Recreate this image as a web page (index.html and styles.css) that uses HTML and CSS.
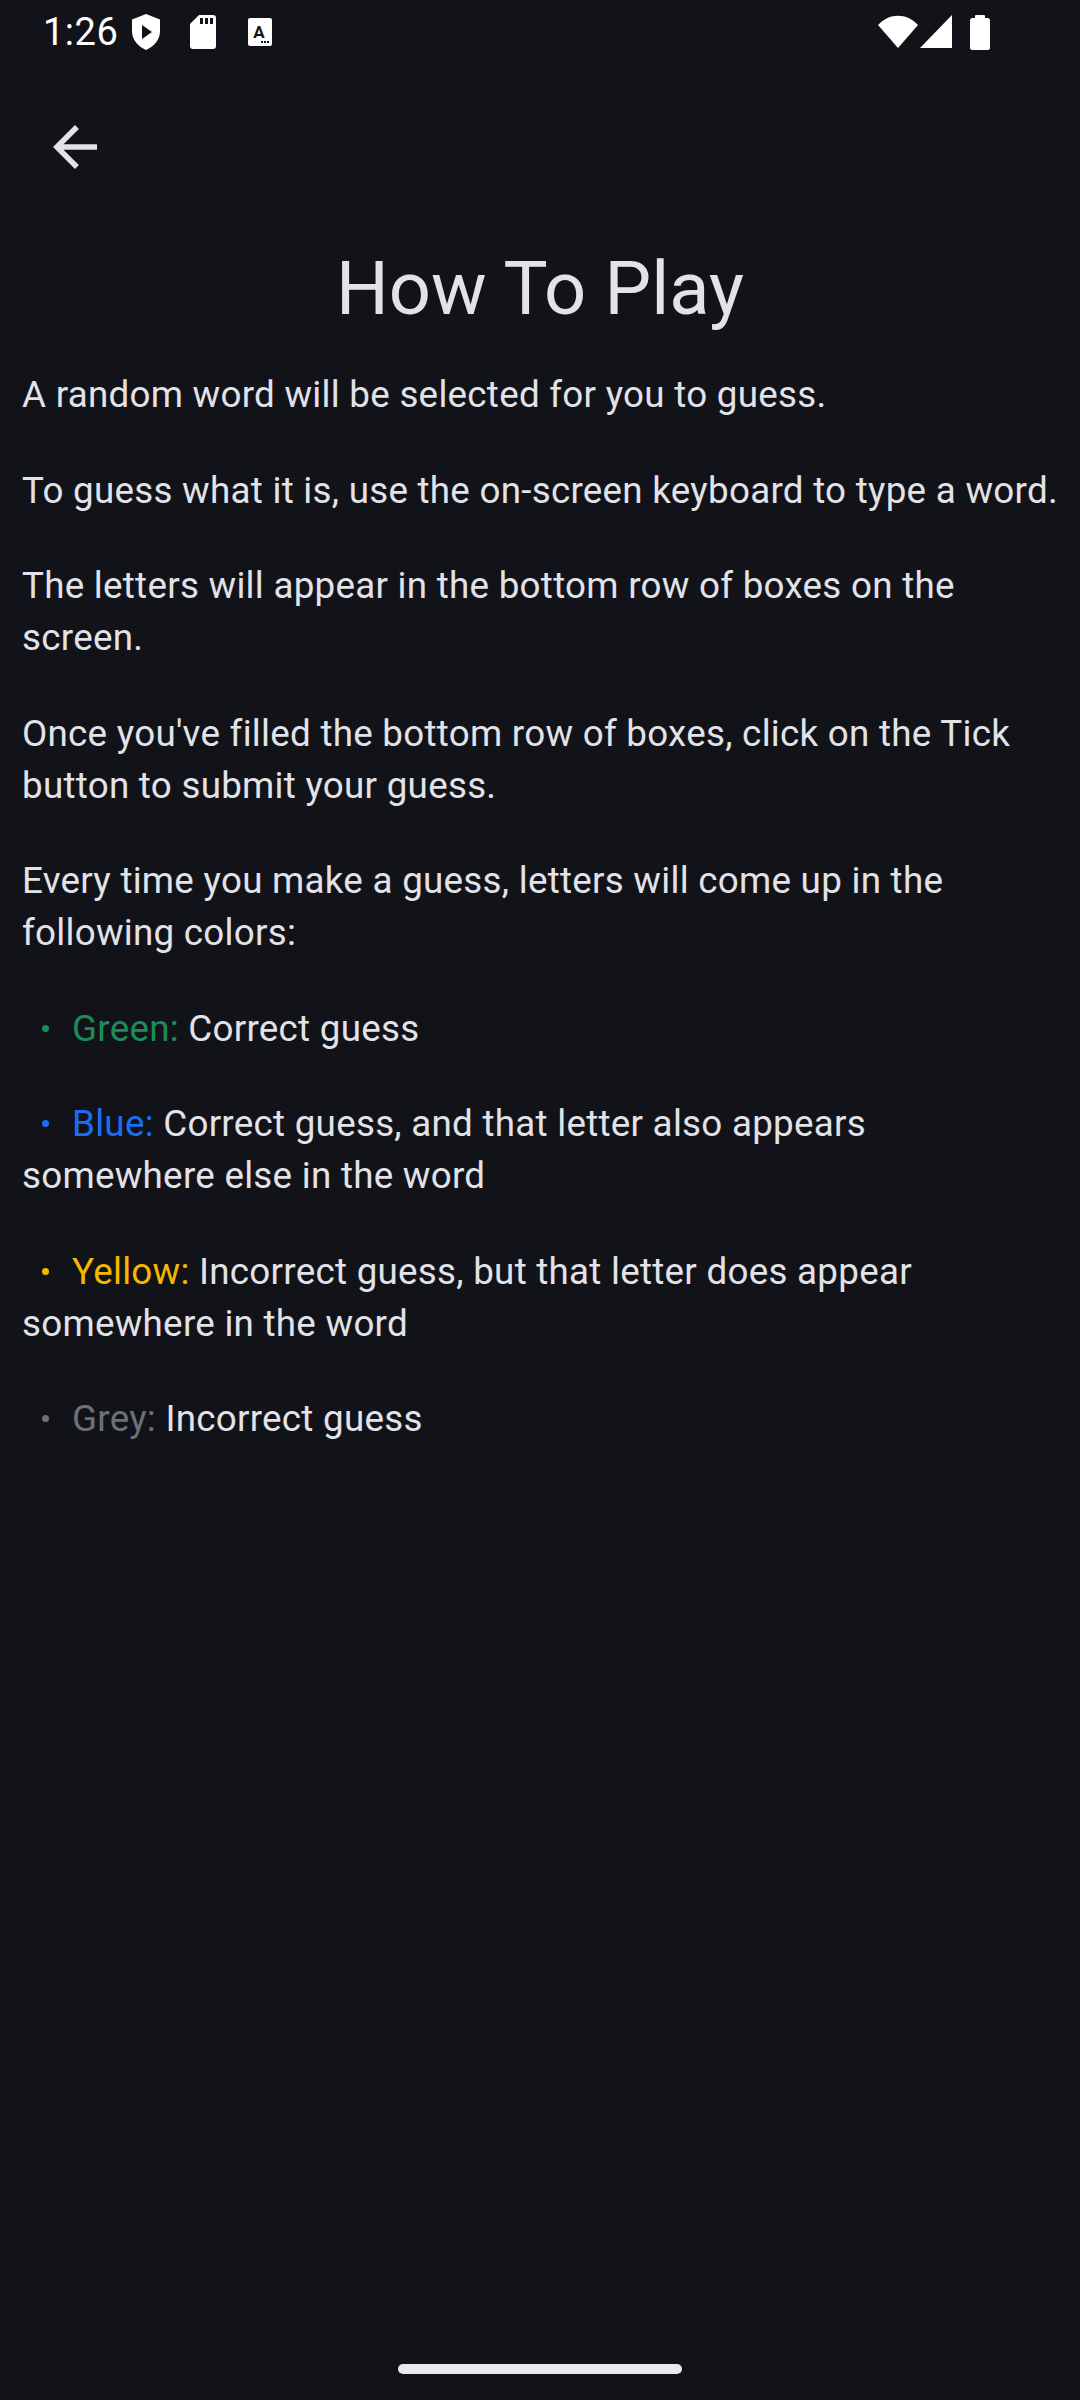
FILE: index.html
```html
<!DOCTYPE html>
<html lang="en">
<head>
<meta charset="utf-8">
<title>How To Play</title>
<link rel="stylesheet" href="styles.css">
</head>
<body>
<div class="screen">
  <div class="statusbar">
    <div class="status-left">
      <span class="time">1:26</span>
      <svg class="ic-shield" width="28" height="36" viewBox="0 0 28 36">
        <path d="M14 0 L28 5.5 V17 C28 26 22 32.5 14 36 C6 32.5 0 26 0 17 V5.5 Z" fill="#fff"/>
        <path d="M10 11 L20 18 L10 25 Z" fill="#121318"/>
      </svg>
      <svg class="ic-sd" width="26" height="34" viewBox="0 0 26 34">
        <path d="M9 0 H23 A3 3 0 0 1 26 3 V31 A3 3 0 0 1 23 34 H3 A3 3 0 0 1 0 31 V9 Z" fill="#fff"/>
        <rect x="10" y="3" width="3" height="6" fill="#121318"/>
        <rect x="15" y="3" width="3" height="6" fill="#121318"/>
        <rect x="20" y="3" width="3" height="6" fill="#121318"/>
      </svg>
      <svg class="ic-a" width="24" height="28" viewBox="0 0 24 28">
        <rect x="0" y="0" width="24" height="28" rx="2" fill="#fff"/>
        <text x="11" y="20" font-family="Roboto, sans-serif" font-weight="700" font-size="17" text-anchor="middle" fill="#121318">A</text>
        <rect x="13" y="23" width="2" height="2" fill="#121318"/>
        <rect x="16" y="23" width="2" height="2" fill="#121318"/>
        <rect x="19" y="23" width="2" height="2" fill="#121318"/>
      </svg>
    </div>
    <div class="status-right">
      <svg class="ic-wifi" width="40" height="34" viewBox="0 0 40 34">
        <path d="M0 10 C11 -2.5 29 -2.5 40 10 L20 33 Z" fill="#fff"/>
      </svg>
      <svg class="ic-signal" width="32" height="34" viewBox="0 0 32 34">
        <path d="M32 0 V33 H0 Z" fill="#fff"/>
      </svg>
      <svg class="ic-battery" width="20" height="35" viewBox="0 0 20 35">
        <rect x="5" y="0" width="10" height="4" rx="1" fill="#fff"/>
        <rect x="0" y="3" width="20" height="32" rx="2.5" fill="#fff"/>
      </svg>
    </div>
  </div>

  <div class="appbar">
    <svg class="back" width="66" height="66" viewBox="0 0 24 24">
      <path d="M20 11H7.83l5.59-5.59L12 4l-8 8 8 8 1.41-1.41L7.83 13H20v-2z" fill="#e2e2e9"/>
    </svg>
  </div>

  <h1 class="title">How To Play</h1>

  <div class="content">
    <p class="para">A random word will be selected for you to guess.</p>
    <p class="para">To guess what it is, use the on-screen keyboard to type a word.</p>
    <p class="para">The letters will appear in the bottom row of boxes on the screen.</p>
    <p class="para">Once you've filled the bottom row of boxes, click on the Tick button to submit your guess.</p>
    <p class="para">Every time you make a guess, letters will come up in the following colors:</p>
    <p class="para"><span class="label green">Green:</span> Correct guess</p>
    <p class="para"><span class="label blue">Blue:</span> Correct guess, and that letter also appears somewhere else in the word</p>
    <p class="para"><span class="label yellow">Yellow:</span> Incorrect guess, but that letter does appear somewhere in the word</p>
    <p class="para"><span class="label grey">Grey:</span> Incorrect guess</p>
  </div>

  <div class="homebar"><div class="handle"></div></div>
</div>
</body>
</html>
```

FILE: styles.css
```css
html, body {
  margin: 0;
  padding: 0;
  background: #121318;
}

.screen {
  width: 1080px;
  height: 2400px;
  display: flex;
  flex-direction: column;
  background: #121318;
  color: #e2e2e9;
  font-family: Roboto, "Noto Sans", sans-serif;
  overflow: hidden;
}

.statusbar {
  height: 48px;
  padding: 8px 90px 16px 43px;
  display: flex;
  align-items: center;
  justify-content: space-between;
}

.status-left {
  display: flex;
  align-items: center;
}

.time {
  font-size: 38px;
  line-height: 48px;
  color: #ffffff;
  letter-spacing: 0.5px;
}

.ic-shield { margin-left: 14px; }
.ic-sd { margin-left: 30px; }
.ic-a { margin-left: 32px; }

.status-right {
  display: flex;
  align-items: center;
}

.ic-signal { margin-left: 2px; }
.ic-battery { margin-left: 18px; }

.appbar {
  height: 66px;
  padding: 42px 0 0 42px;
  display: flex;
  align-items: center;
}

.back {
  display: block;
}

.title {
  margin: 65px 0 0 0;
  font-size: 74px;
  line-height: 88px;
  font-weight: 400;
  text-align: center;
  color: #e2e2e9;
}

.content {
  padding: 36px 21px 0 22px;
}

.para {
  margin: 0 0 43.5px 0;
  font-size: 36.75px;
  line-height: 52px;
  letter-spacing: 0.27px;
}

.label::before {
  content: "";
  display: inline-block;
  width: 7px;
  height: 7px;
  border-radius: 50%;
  margin: 0 23px 0 20px;
  background: currentColor;
  vertical-align: 9px;
}

.green { color: #1c8c57; }
.blue { color: #1a6ef5; }
.yellow { color: #f5b700; }
.grey { color: #6b7177; }

.homebar {
  margin-top: auto;
  height: 36px;
  display: flex;
  justify-content: center;
}

.handle {
  width: 284px;
  height: 10px;
  border-radius: 5px;
  background: #ebebeb;
}
```
